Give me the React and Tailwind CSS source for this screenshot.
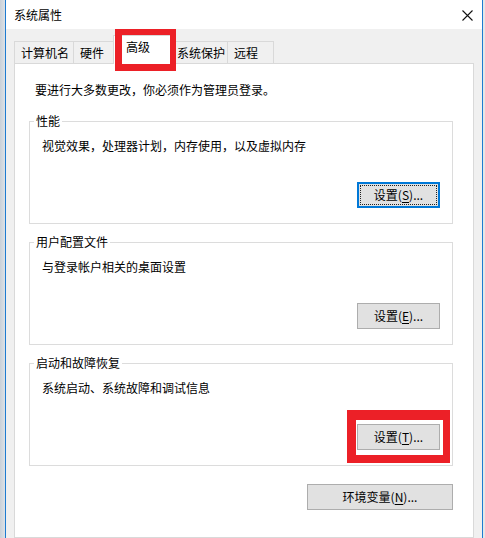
import React from "react";

function Key({ label, k, tail = ")..." }) {
  return (
    <>
      {label}(<span className="underline underline-offset-[2px]">{k}</span>
      {tail}
    </>
  );
}

function Button({ children, width = "w-[83px]", focused = false }) {
  return (
    <button
      type="button"
      className={
        focused
          ? `relative ${width} h-[26px] border-2 border-[#0078d7] bg-[#e1e1e1] text-[12px] leading-[16px] text-black`
          : `relative ${width} h-[26px] border border-[#adadad] bg-[#e1e1e1] text-[12px] leading-[16px] text-black`
      }
    >
      {focused && (
        <span className="pointer-events-none absolute inset-[1px] border border-dotted border-[#222]" />
      )}
      {children}
    </button>
  );
}

function Group({ title, text, children }) {
  return (
    <fieldset className="ml-[14px] mr-[20px] border border-[#dcdcdc] pb-[15px]">
      <legend className="ml-[4px] px-[2px] leading-[16px]">{title}</legend>
      <p className="mt-[9px] pl-[12px] leading-[16px]">{text}</p>
      <div className="mt-[28px] flex justify-end pr-[12px]">{children}</div>
    </fieldset>
  );
}

const tabs = [
  { name: "计算机名", w: "w-[60px]" },
  { name: "硬件", w: "w-[43px]" },
  { name: "高级", w: "w-[55px]", active: true },
  { name: "系统保护", w: "w-[58px]" },
  { name: "远程", w: "w-[47px]" },
];

export default function App() {
  return (
    <div className="flex h-[538px] w-[485px] overflow-hidden bg-[#d5dae0] font-['Noto_Sans_CJK_SC','Microsoft_YaHei',sans-serif] text-[12px] leading-[16px] text-black">
      <div className="w-[5px] shrink-0 bg-gradient-to-r from-[#c9d0d8] to-[#dde2e7]" />

      <div className="flex w-[478px] shrink-0 flex-col border-x border-[#1e7bd0] bg-[#f0f0f0]">
        {/* title bar */}
        <div className="flex h-[29px] items-center justify-between bg-white pl-[8px] pr-[9px]">
          <span>系统属性</span>
          <svg width="11" height="11" viewBox="0 0 11 11" className="mt-[1px]">
            <path d="M0.5 0.5 L10.5 10.5 M10.5 0.5 L0.5 10.5" stroke="#111" strokeWidth="1.1" fill="none" />
          </svg>
        </div>

        <div className="flex flex-1 flex-col px-[8px] pt-[12px]">
          {/* tabs */}
          <div className="flex h-[22px] items-end">
            {tabs.map((t) =>
              t.active ? (
                <div
                  key={t.name}
                  className={`relative z-10 -mx-[2px] -mb-px h-[25px] ${t.w} box-content border border-b-0 border-[#d9d9d9] bg-white pl-[12px] pt-[3px] -ml-[2px]`}
                  style={{ width: 45 }}
                >
                  {t.name}
                  <span className="pointer-events-none absolute -bottom-[7px] -right-[5px] -top-[7px] left-[1px] border-b-[7px] border-l-[7px] border-r-[6px] border-t-[6px] border-[#ec2027]" />
                </div>
              ) : (
                <div
                  key={t.name}
                  className={`-mr-px h-[22px] ${t.w} border border-b-0 border-[#d9d9d9] bg-[#f0f0f0] pl-[6px] pt-[3px] first:ml-0`}
                >
                  {t.name}
                </div>
              )
            )}
          </div>

          {/* panel */}
          <div className="flex-1 border border-[#d9d9d9] bg-white pt-[18px]">
            <p className="pl-[20px]">要进行大多数更改，你必须作为管理员登录。</p>

            <div className="mt-[15px]">
              <Group title="性能" text="视觉效果，处理器计划，内存使用，以及虚拟内存">
                <Button focused>
                  <Key label="设置" k="S" />
                </Button>
              </Group>
            </div>

            <div className="mt-[10px]">
              <Group title="用户配置文件" text="与登录帐户相关的桌面设置">
                <Button>
                  <Key label="设置" k="E" />
                </Button>
              </Group>
            </div>

            <div className="mt-[10px]">
              <Group title="启动和故障恢复" text="系统启动、系统故障和调试信息">
                <div className="relative">
                  <Button>
                    <Key label="设置" k="T" />
                  </Button>
                  <span className="pointer-events-none absolute -bottom-[13px] -left-[10px] -right-[10px] -top-[14px] border-b-[8px] border-l-[9px] border-r-[7px] border-t-[10px] border-[#ec2027]" />
                </div>
              </Group>
            </div>

            <div className="mr-[20px] mt-[18px] flex justify-end">
              <Button width="w-[146px]">
                <Key label="环境变量" k="N" />
              </Button>
            </div>
          </div>
        </div>
      </div>

      <div className="w-[2px] shrink-0 bg-[#e6e6e6]" />
    </div>
  );
}
